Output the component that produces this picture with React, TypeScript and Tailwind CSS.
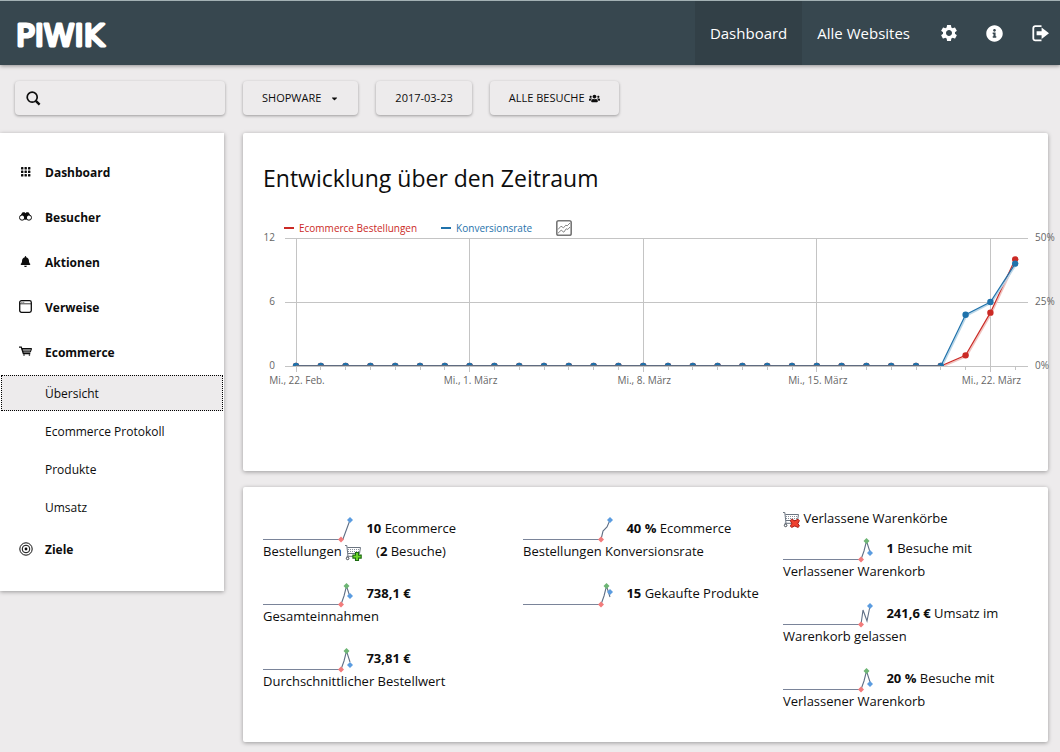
import type { ReactNode } from 'react';
import { FaBell, FaCaretDown, FaInfoCircle, FaUsers } from 'react-icons/fa';
import { MdSettings } from 'react-icons/md';

const ORDERS = [...Array(27).fill(0), 1, 5, 10];
const RATES = [...Array(27).fill(0), 20, 25, 40];
const DAY_LABELS = [
    { day: 0, text: 'Mi., 22. Feb.' },
    { day: 7, text: 'Mi., 1. März' },
    { day: 14, text: 'Mi., 8. März' },
    { day: 21, text: 'Mi., 15. März' },
    { day: 28, text: 'Mi., 22. März' },
];

function GridIcon() {
    return (
        <svg viewBox="0 0 13 13" className="size-[13px]" fill="currentColor" aria-hidden="true">
            {[2, 5.5, 9].map((y) =>
                [2, 5.5, 9].map((x) => <rect key={`${x}-${y}`} x={x} y={y} width="2.4" height="2.4" rx="0.5" />),
            )}
        </svg>
    );
}

function BinocularsIcon() {
    return (
        <svg viewBox="0 0 13 13" className="size-[13px]" aria-hidden="true">
            <path d="M2.2 4.2 3.6 2.3h2l.9.9.9-.9h2l1.4 1.9.8 3-2.6-.6-1.6 2.8H5.6L4 6.6l-2.6.6z" fill="currentColor" />
            <circle cx="3.1" cy="7.6" r="2.6" fill="#fff" stroke="currentColor" strokeWidth="1" />
            <circle cx="9.9" cy="7.6" r="2.6" fill="#fff" stroke="currentColor" strokeWidth="1" />
            <path d="M4.4 4.2h4.2L7.6 9.4H5.4z" fill="currentColor" />
        </svg>
    );
}

function WindowIcon() {
    return (
        <svg viewBox="0 0 13 13" className="size-[13px]" fill="none" stroke="currentColor" aria-hidden="true">
            <rect x="0.7" y="0.7" width="11.6" height="11.6" rx="1.8" strokeWidth="1.3" />
            <path d="M1 3.8h11" strokeWidth="0.8" />
            <path d="M2.4 2.3h3" strokeWidth="0.8" strokeDasharray="0.9 0.5" />
        </svg>
    );
}

function CartIcon() {
    return (
        <svg viewBox="0 0 13 13" className="size-[13px]" fill="none" stroke="currentColor" aria-hidden="true">
            <path d="M0 2.2h2.3l2 6.4h7" strokeWidth="1.2" />
            <path d="M3 3.5h9.6l-1.2 3.6H4z" fill="currentColor" fillOpacity="0.55" strokeWidth="1" />
            <circle cx="5" cy="10" r="0.8" fill="currentColor" stroke="none" />
            <circle cx="10.4" cy="10" r="0.8" fill="currentColor" stroke="none" />
        </svg>
    );
}

function TargetIcon() {
    return (
        <svg viewBox="0 0 14 14" className="size-[14px]" fill="none" stroke="currentColor" aria-hidden="true">
            <circle cx="7" cy="7" r="6.2" strokeWidth="1" />
            <circle cx="7" cy="7" r="3.8" strokeWidth="1" />
            <circle cx="7" cy="7" r="1.4" fill="currentColor" stroke="none" />
        </svg>
    );
}

function SearchIcon() {
    return (
        <svg viewBox="0 0 15 15" className="size-[15px]" fill="none" stroke="currentColor" aria-hidden="true">
            <circle cx="6.2" cy="6.2" r="5" strokeWidth="1.7" />
            <path d="m9.8 9.8 3.8 3.8" strokeWidth="2.4" />
        </svg>
    );
}

function SignOutIcon() {
    return (
        <svg viewBox="0 0 17 17" className="size-[17px]" aria-hidden="true">
            <path d="M9.5 1.2H3.2a1.9 1.9 0 0 0-1.9 1.9v10.4a1.9 1.9 0 0 0 1.9 1.9h6.3" fill="none" stroke="currentColor" strokeWidth="1.8" />
            <path d="M4.6 6.3h5V2.5l7.4 5.8-7.4 5.8v-3.8h-5z" fill="currentColor" />
        </svg>
    );
}

/** Shop cart with a status badge: a green plus or a red cross. */
function CartBadge({ kind }: { kind: 'added' | 'abandoned' }) {
    return (
        <svg viewBox="0 0 17 17" className="inline-block size-[17px] align-[-5px]" fill="none" aria-hidden="true">
            <path d="M0 1.5h1.8l1.2 10.8M2.4 3.5h13.1l-1 6H3M1.6 12.3h9" stroke="#6b7480" strokeWidth="1" />
            <path d="M3 5.5h12M3 7.5h12" stroke="#8a929c" strokeWidth="1" strokeDasharray="1 1" />
            <circle cx="2.6" cy="14.4" r="1.3" fill="#fff" stroke="#3f4650" />
            {kind === 'added' ? (
                <path d="M10.5 8.5h3v2.6h2.7v3h-2.7v2.4h-3v-2.4H7.9v-3h2.6z" fill="#6fd82b" stroke="#1c6b12" strokeWidth="1.1" />
            ) : (
                <path d="m8.6 8.2 3.2 1.6 3.2-1.6 1.4 1.5-1.5 2.7 1.5 2.7-1.4 1.3-3.2-1.4-3.2 1.4-1.2-1.3 1.4-2.7-1.4-2.7z" fill="#ee4130" stroke="#a81d16" strokeWidth="1" />
            )}
        </svg>
    );
}

const NAV = [
    { label: 'Dashboard', icon: <GridIcon /> },
    { label: 'Besucher', icon: <BinocularsIcon /> },
    { label: 'Aktionen', icon: <FaBell className="size-[11px]" /> },
    { label: 'Verweise', icon: <WindowIcon /> },
    { label: 'Ecommerce', icon: <CartIcon />, children: ['Übersicht', 'Ecommerce Protokoll', 'Produkte', 'Umsatz'] },
    { label: 'Ziele', icon: <TargetIcon /> },
];

function Header() {
    return (
        <header className="relative flex h-[65px] items-center justify-between border-t border-[#a3b1b4] bg-[#37474f] pl-4 text-white shadow-[0_1px_4px_rgba(0,0,0,0.4)]">
            <a href="#" aria-label="PIWIK">
                <svg viewBox="0 0 100 44" className="h-11 w-[100px]">
                    <text
                        x="0"
                        y="35"
                        fontFamily="DejaVu Sans"
                        fontSize="31"
                        fill="#fff"
                        stroke="#fff"
                        strokeWidth="3"
                        strokeLinejoin="round"
                    >
                        PIWIK
                    </text>
                </svg>
            </a>
            <nav className="flex h-full items-center text-[15px]">
                <a href="#" className="flex h-full items-center bg-[#324047] px-[15px]">Dashboard</a>
                <a href="#" className="flex h-full items-center pr-4 pl-[15px]">Alle Websites</a>
                <a href="#" aria-label="Einstellungen" className="px-[13px]"><MdSettings className="size-5" /></a>
                <a href="#" aria-label="Hilfe" className="px-[14px]"><FaInfoCircle className="size-[17px]" /></a>
                <a href="#" aria-label="Abmelden" className="pr-[11px] pl-[15px]"><SignOutIcon /></a>
            </nav>
        </header>
    );
}

function Sidebar() {
    return (
        <aside className="w-[225px] shrink-0">
            <label className="ml-[15px] flex h-[34px] items-center rounded-sm pl-[11px] shadow-[0_1px_3px_rgba(0,0,0,0.35)]">
                <SearchIcon />
                <input type="search" aria-label="Suche" className="min-w-0 flex-1 bg-transparent px-2 text-[12px] outline-none" />
            </label>
            <nav className="mt-[18px] mr-px bg-white pt-4 pb-5 text-[12px] shadow-[0_1px_4px_rgba(0,0,0,0.35)]">
                <ul>
                    {NAV.map((item) => (
                        <li key={item.label}>
                            <a href="#" className="flex h-[45px] items-center font-bold">
                                <span className="ml-[18px] flex w-[15px] justify-center">{item.icon}</span>
                                <span className="ml-3 pt-[2px]">{item.label}</span>
                            </a>
                            {item.children && (
                                <ul>
                                    {item.children.map((child, i) => (
                                        <li key={child} className="h-[38px] py-px">
                                            <a
                                                href="#"
                                                className={`mx-px flex h-full items-center border border-dotted pt-px pl-[43px] ${
                                                    i === 0 ? 'border-black bg-[#edebec]' : 'border-transparent'
                                                }`}
                                            >
                                                {child}
                                            </a>
                                        </li>
                                    ))}
                                </ul>
                            )}
                        </li>
                    ))}
                </ul>
            </nav>
        </aside>
    );
}

function Selector({ children }: { children: ReactNode }) {
    return (
        <button
            type="button"
            className="flex h-[34px] items-center rounded-sm px-[19px] text-[11px] uppercase shadow-[0_1px_3px_rgba(0,0,0,0.35)]"
        >
            {children}
        </button>
    );
}

function EvolutionChart() {
    const x = (day: number) => 33 + day * 24.8;
    const y = (share: number) => 136 - share * 128;
    const series = [
        { color: '#cb2a25', shadow: '#f0c4c0', shares: ORDERS.map((v) => v / 12) },
        { color: '#1f72ab', shadow: '#b9d6e8', shares: RATES.map((v) => v / 50) },
    ];
    return (
        <svg viewBox="0 0 765 160" className="block w-full overflow-visible" fontSize="10" fill="#666" role="img" aria-label="Entwicklung über den Zeitraum">
            <clipPath id="plot">
                <rect x="22" y="0" width="743" height="136" />
            </clipPath>
            <g stroke="#c4c4c4" shapeRendering="crispEdges">
                {[8, 72, 136].map((row) => <path key={row} d={`M22 ${row}.5H765`} />)}
                {DAY_LABELS.map(({ day }) => <path key={day} d={`M${x(day)} 8V142`} />)}
                {ORDERS.map((_, day) => <path key={day} d={`M${x(day)} 136V140`} />)}
            </g>
            {['12', '6', '0'].map((text, i) => (
                <text key={text} x="12" y={11 + i * 64} textAnchor="end">{text}</text>
            ))}
            {['50%', '25%', '0%'].map((text, i) => (
                <text key={text} x="772" y={11 + i * 64}>{text}</text>
            ))}
            {DAY_LABELS.map(({ day, text }) => (
                <text key={text} x={x(day) + 1} y="154" textAnchor="middle">{text}</text>
            ))}
            <g clipPath="url(#plot)">
                {series.map(({ color, shadow, shares }) => {
                    const points = shares.map((s, day) => `${x(day)},${y(s)}`).join(' ');
                    return (
                        <g key={color}>
                            <polyline points={points} fill="none" stroke={shadow} strokeWidth="1.5" transform="translate(1 1)" />
                            <polyline points={points} fill="none" stroke={color} strokeWidth="1.2" />
                            {shares.map((s, day) => <circle key={day} cx={x(day)} cy={y(s)} r="3.2" fill={color} />)}
                        </g>
                    );
                })}
            </g>
            <path d="M33 135.5H677" stroke="#5f6b80" />
        </svg>
    );
}

function EvolutionCard() {
    return (
        <section className="mt-[18px] h-[338px] rounded-xs bg-white px-5 pt-[29px] shadow-[0_1px_4px_rgba(0,0,0,0.35)]">
            <h2 className="text-[23px] leading-8">Entwicklung über den Zeitraum</h2>
            <div className="mt-[25px] flex h-[18px] items-center pl-[21px] text-[10px]">
                <span className="h-[2px] w-[10px] bg-[#cb2a25]" />
                <span className="ml-[5px] text-[#cb2a25]">Ecommerce Bestellungen</span>
                <span className="ml-6 h-[2px] w-[10px] bg-[#1f72ab]" />
                <span className="ml-[5px] text-[#1f72ab]">Konversionsrate</span>
                <button type="button" aria-label="Metriken wählen" className="ml-6">
                    <svg viewBox="0 0 16 16" className="size-4" fill="none" stroke="#777">
                        <rect x="0.8" y="0.8" width="14.4" height="14.4" rx="1.8" strokeWidth="1.6" />
                        <path d="M2 9.5 5 6.2l2.5 1.6 2.3-2.6 1.4.6L14 3M2 13.2l3.2-3 2.6 2 2.4-3.4 1.6.6L14 7" strokeWidth="0.9" />
                    </svg>
                </button>
            </div>
            <div className="-mt-[7px]">
                <EvolutionChart />
            </div>
        </section>
    );
}

/** Sparkline: flat up to x=78, then the given tail. */
function Sparkline({ tail, peak, end }: { tail: string; peak?: number; end: number }) {
    const dot = (cx: number, cy: number, fill: string) => (
        <path d={`M${cx} ${cy - 3}l3 3-3 3-3-3z`} fill={fill} />
    );
    return (
        <svg viewBox="0 0 100 26" className="-mt-1 -mb-1 inline-block h-[26px] w-[100px] align-[-6px]" fill="none" aria-hidden="true">
            <path d="M0 22.5H78" stroke="#7a8499" />
            <path d={`M78 22.5L${tail}`} stroke="#5f6f85" strokeWidth="1.1" />
            {dot(78, 22.5, '#f27c7c')}
            {peak !== undefined && dot(83.5, peak, '#6db574')}
            {dot(87, end, '#5b9ce0')}
        </svg>
    );
}

const PEAK_TAIL = '81 14 83.5 4 87 15';

function Metric({ spark, children }: { spark: ReactNode; children: ReactNode }) {
    return (
        <p className="mb-[19px]">
            {spark} {children}
        </p>
    );
}

function MetricsCard() {
    return (
        <section className="mt-4 grid grid-cols-3 gap-[15px] rounded-xs bg-white px-5 pt-5 pb-[10px] text-[13px] leading-[23px] shadow-[0_1px_4px_rgba(0,0,0,0.35)]">
            <div className="pt-[10px]">
                <Metric spark={<Sparkline tail="80 22 87 3" end={3} />}>
                    <b>10</b> Ecommerce Bestellungen <CartBadge kind="added" />
                    <span className="ml-[14px]">(<b>2</b> Besuche)</span>
                </Metric>
                <Metric spark={<Sparkline tail={PEAK_TAIL} peak={4} end={14} />}>
                    <b>738,1 €</b> Gesamteinnahmen
                </Metric>
                <Metric spark={<Sparkline tail={PEAK_TAIL} peak={4} end={18} />}>
                    <b>73,81 €</b> Durchschnittlicher Bestellwert
                </Metric>
            </div>
            <div className="pt-[10px]">
                <Metric spark={<Sparkline tail="80 14 84 10 87 3" end={3} />}>
                    <b>40 %</b> Ecommerce Bestellungen Konversionsrate
                </Metric>
                <Metric spark={<Sparkline tail={PEAK_TAIL} peak={4} end={10} />}>
                    <b>15</b> Gekaufte Produkte
                </Metric>
            </div>
            <div>
                <p className="mb-[7px]">
                    <CartBadge kind="abandoned" /> Verlassene Warenkörbe
                </p>
                <Metric spark={<Sparkline tail={PEAK_TAIL} peak={4} end={16} />}>
                    <b>1</b> Besuche mit Verlassener Warenkorb
                </Metric>
                <Metric spark={<Sparkline tail="80 8 84 19 87 4" end={4} />}>
                    <b>241,6 €</b> Umsatz im Warenkorb gelassen
                </Metric>
                <Metric spark={<Sparkline tail={PEAK_TAIL} peak={4} end={17} />}>
                    <b>20 %</b> Besuche mit Verlassener Warenkorb
                </Metric>
            </div>
        </section>
    );
}

export default function App() {
    return (
        <div className="min-h-screen bg-[#edebec] font-['Open_Sans',sans-serif] text-[#0d0d0d]">
            <Header />
            <div className="flex pt-4">
                <Sidebar />
                <main className="mr-3 ml-[18px] min-w-0 flex-1 pb-[10px]">
                    <div className="flex gap-[18px]">
                        <Selector>Shopware <FaCaretDown className="ml-[9px] size-[9px]" /></Selector>
                        <Selector>2017-03-23</Selector>
                        <Selector>Alle Besuche <FaUsers className="ml-1 size-[11px]" /></Selector>
                    </div>
                    <EvolutionCard />
                    <MetricsCard />
                </main>
            </div>
        </div>
    );
}
